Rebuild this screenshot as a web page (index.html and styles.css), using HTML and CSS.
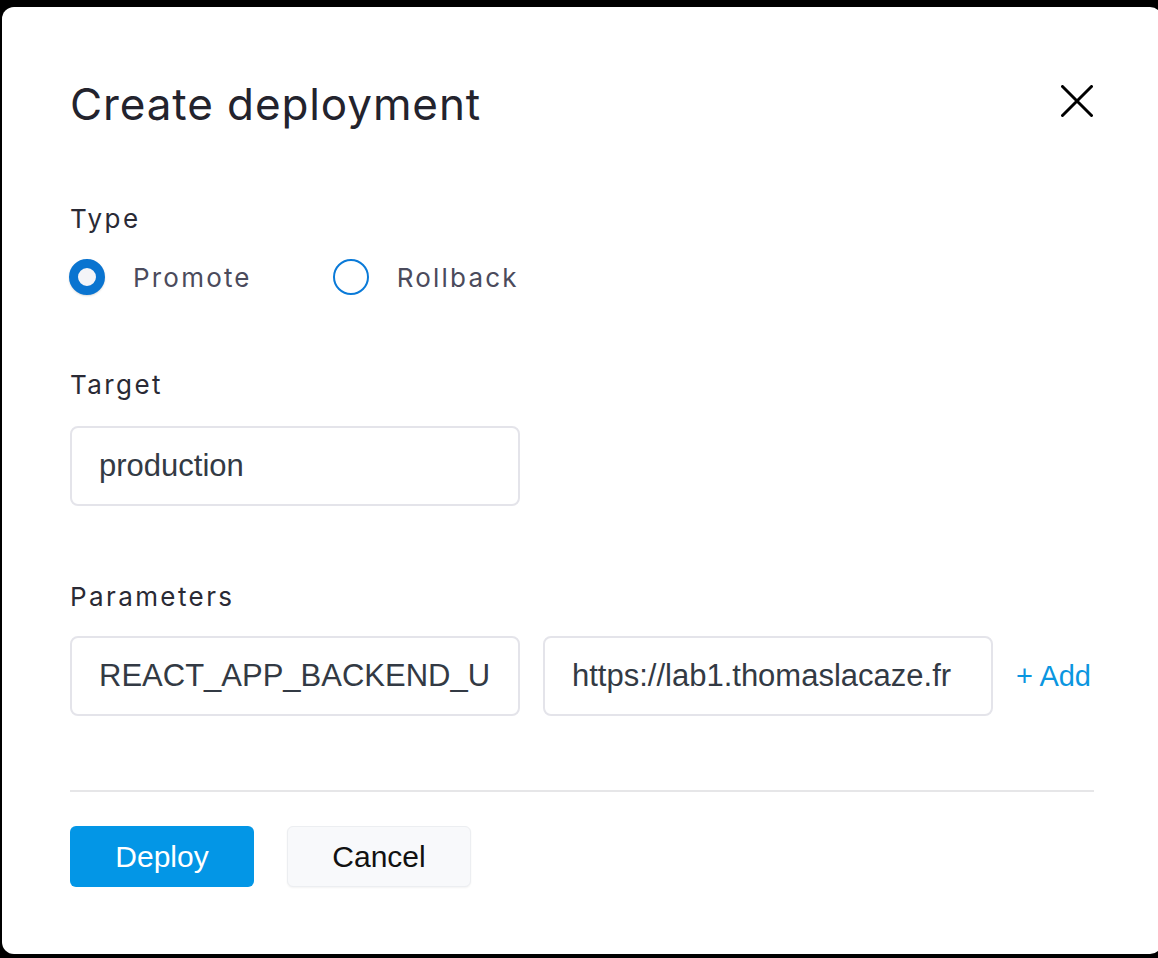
FILE: index.html
```html
<!DOCTYPE html>
<html lang="en">
<head>
<meta charset="utf-8">
<title>Create deployment</title>
<link rel="stylesheet" href="styles.css">
</head>
<body>
<div class="modal">
  <div class="header">
    <h1 class="title">Create deployment</h1>
    <button class="close" aria-label="Close">
      <svg width="32" height="32" viewBox="0 0 32 32"><path d="M1.5 1.5 L30.5 30.5 M30.5 1.5 L1.5 30.5" stroke="#000" stroke-width="3" stroke-linecap="round"/></svg>
    </button>
  </div>

  <div class="field field-type">
    <div class="label">Type</div>
    <div class="radios">
      <label class="radio"><span class="dot checked"></span><span class="radio-text">Promote</span></label>
      <label class="radio"><span class="dot"></span><span class="radio-text">Rollback</span></label>
    </div>
  </div>

  <div class="field field-target">
    <div class="label">Target</div>
    <div class="input"><span class="value">production</span></div>
  </div>

  <div class="field field-params">
    <div class="label">Parameters</div>
    <div class="param-row">
      <div class="input"><span class="value">REACT_APP_BACKEND_URL</span></div>
      <div class="input"><span class="value">https://lab1.thomaslacaze.fr</span></div>
      <a class="add">+ Add</a>
    </div>
  </div>

  <div class="divider"></div>

  <div class="actions">
    <button class="btn primary">Deploy</button>
    <button class="btn secondary">Cancel</button>
  </div>
</div>
</body>
</html>
```

FILE: styles.css
```css
html, body {
  margin: 0;
  padding: 0;
  background: #000;
  height: 100%;
  overflow: hidden;
}

.modal {
  box-sizing: border-box;
  margin: 7px 0 0 2px;
  width: 1160px;
  height: 947px;
  background: #fff;
  border-radius: 12px;
  padding: 73px 69px 0 68px;
  font-family: Inter, "Noto Sans", sans-serif;
}

.header {
  display: flex;
  justify-content: space-between;
  align-items: flex-start;
  height: 48px;
}

.title {
  margin: 0;
  font-size: 44px;
  line-height: 48px;
  font-weight: 400;
  letter-spacing: 0.9px;
  color: #23232d;
}

.close {
  border: 0;
  background: none;
  padding: 0;
  width: 32px;
  height: 32px;
  margin-top: 5px;
  display: flex;
}

.label {
  font-size: 26px;
  line-height: 32px;
  color: #2a2a35;
  letter-spacing: 2.4px;
}

.field-type { margin-top: 75px; }
.field-target { margin-top: 74px; }
.field-params { margin-top: 75px; }

.radios {
  display: flex;
  margin: 24px 0 0 -1px;
  height: 36px;
  align-items: center;
}

.radio {
  display: flex;
  align-items: center;
  margin-right: 81px;
}

.dot {
  box-sizing: border-box;
  width: 36px;
  height: 36px;
  border-radius: 50%;
  border: 2px solid #0a7ad8;
  background: #fff;
}

.dot.checked {
  border: 9px solid #0a74d0;
  background: #f4f4f8;
  box-shadow: 0 1px 2px rgba(0, 0, 0, 0.15);
}

.radio-text {
  margin-left: 28px;
  font-size: 26px;
  color: #4b4b5c;
  letter-spacing: 2.2px;
}

.input {
  box-sizing: border-box;
  width: 450px;
  height: 80px;
  margin-top: 25px;
  border: 2px solid #e4e4ea;
  border-radius: 8px;
  padding: 0 27px;
  display: flex;
  align-items: center;
  font-family: "Liberation Sans", Arial, sans-serif;
  font-size: 31px;
  color: #333a44;
  white-space: nowrap;
}

.value {
  display: block;
  overflow: hidden;
  width: 100%;
}

.param-row {
  display: flex;
  align-items: center;
  gap: 23px;
}

.param-row .input,
.add {
  margin-top: 23px;
}

.add {
  font-family: "Liberation Sans", Arial, sans-serif;
  font-size: 29px;
  color: #0b96e0;
  white-space: nowrap;
}

.divider {
  margin-top: 74px;
  height: 2px;
  background: #e6e6e8;
  width: 1024px;
}

.actions {
  display: flex;
  gap: 33px;
  margin-top: 34px;
}

.btn {
  box-sizing: border-box;
  width: 184px;
  height: 61px;
  border-radius: 6px;
  font-family: "Liberation Sans", Arial, sans-serif;
  font-size: 30px;
  padding: 0;
}

.primary {
  background: #0396e6;
  color: #fff;
  border: 0;
}

.secondary {
  background: #f8f9fb;
  color: #111;
  border: 1px solid #eceef1;
  box-shadow: 0 1px 2px rgba(0, 0, 0, 0.05);
}
```
